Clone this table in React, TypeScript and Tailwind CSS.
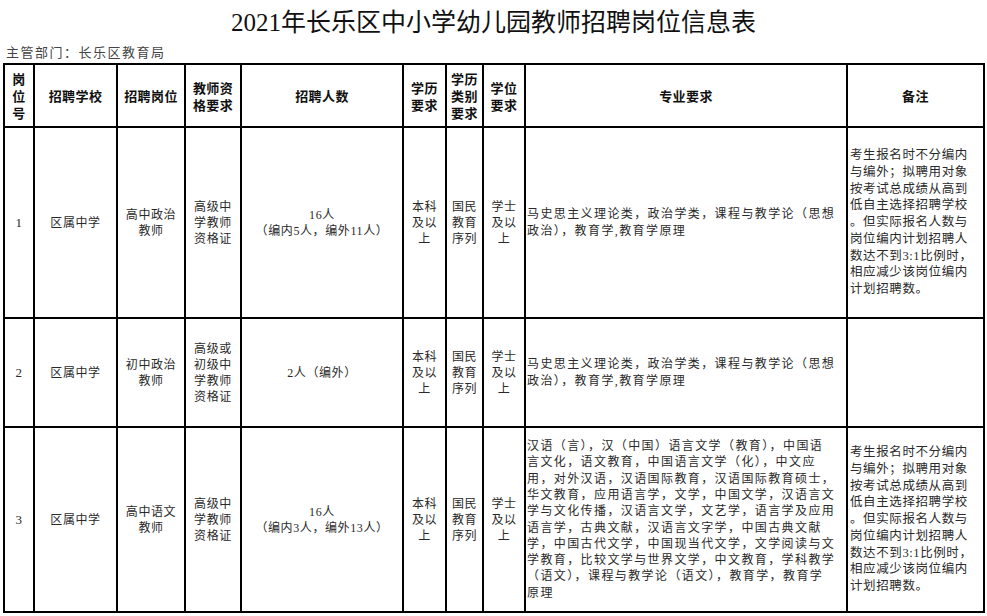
import React from "react";

const serif = "font-['Liberation_Serif','Noto_Sans_CJK_SC',serif]";
const head = "font-['Noto_Sans_CJK_SC',sans-serif] font-bold text-[13px] tracking-[0.4px] text-[#111]";

function Lines({ lines, cls }: { lines: string[]; cls?: string }) {
  return <div className={`whitespace-pre ${cls ?? ""}`}>{lines.join("\n")}</div>;
}

function Cell({ children, left }: { children?: React.ReactNode; left?: boolean }) {
  return (
    <div
      className={
        left
          ? "bg-white flex items-center justify-start text-left"
          : "bg-white flex items-center justify-center text-center"
      }
    >
      {children}
    </div>
  );
}

const headers: string[][] = [
  ["岗", "位", "号"],
  ["招聘学校"],
  ["招聘岗位"],
  ["教师资", "格要求"],
  ["招聘人数"],
  ["学历", "要求"],
  ["学历", "类别", "要求"],
  ["学位", "要求"],
  ["专业要求"],
  ["备注"],
];

const majors1 = ["马史思主义理论类，政治学类，课程与教学论（思想", "政治），教育学,教育学原理"];
const majors3 = [
  "汉语（言），汉（中国）语言文学（教育），中国语",
  "言文化，语文教育，中国语言文学（化），中文应",
  "用，对外汉语，汉语国际教育，汉语国际教育硕士，",
  "华文教育，应用语言学，文学，中国文学，汉语言文",
  "学与文化传播，汉语言文学，文艺学，语言学及应用",
  "语言学，古典文献，汉语言文字学，中国古典文献",
  "学，中国古代文学，中国现当代文学，文学阅读与文",
  "学教育，比较文学与世界文学，中文教育，学科教学",
  "（语文），课程与教学论（语文），教育学，教育学",
  "原理",
];
const remarks = [
  "考生报名时不分编内",
  "与编外；拟聘用对象",
  "按考试总成绩从高到",
  "低自主选择招聘学校",
  "。但实际报名人数与",
  "岗位编内计划招聘人",
  "数达不到3:1比例时，",
  "相应减少该岗位编内",
  "计划招聘数。",
];

type Row = {
  no: string;
  post: string[];
  cert: string[];
  count: string[];
  majors: string[];
  remarks: string[];
};

const rows: Row[] = [
  {
    no: "1",
    post: ["高中政治", "教师"],
    cert: ["高级中", "学教师", "资格证"],
    count: ["16人", "（编内5人，编外11人）"],
    majors: majors1,
    remarks: remarks,
  },
  {
    no: "2",
    post: ["初中政治", "教师"],
    cert: ["高级或", "初级中", "学教师", "资格证"],
    count: ["2人（编外）"],
    majors: majors1,
    remarks: [],
  },
  {
    no: "3",
    post: ["高中语文", "教师"],
    cert: ["高级中", "学教师", "资格证"],
    count: ["16人", "（编内3人，编外13人）"],
    majors: majors3,
    remarks: remarks,
  },
];

const body = "text-[12px] leading-[16px] tracking-[0.6px] text-[#2a2a2a]";

export default function App() {
  return (
    <div className={`w-[987px] h-[616px] bg-white overflow-hidden ${serif}`}>
      <div className="h-[42px] flex items-center justify-center text-[25px] leading-none text-[#111] pt-[2px]">
        2021年长乐区中小学幼儿园教师招聘岗位信息表
      </div>
      <div className="h-[21px] flex items-center pl-[6px] text-[13px] tracking-[1.5px] text-[#444]">
        主管部门：长乐区教育局
      </div>
      <div className="ml-[3px] w-[982px] border-2 border-black bg-black grid grid-cols-[28px_81px_66px_54px_160px_41px_35px_40px_320px_135px] grid-rows-[61px_189px_107px_183px] gap-[2px]">
        {headers.map((h, i) => (
          <Cell key={"h" + i}>
            <Lines lines={h} cls={`${head} leading-[17px]`} />
          </Cell>
        ))}
        {rows.map((r, ri) => (
          <React.Fragment key={ri}>
            <Cell>
              <div className={`${body} text-[13px]`}>{r.no}</div>
            </Cell>
            <Cell>
              <div className={body}>区属中学</div>
            </Cell>
            <Cell>
              <Lines lines={r.post} cls={body} />
            </Cell>
            <Cell>
              <Lines lines={r.cert} cls={body} />
            </Cell>
            <Cell>
              <Lines lines={r.count} cls={`${body} tracking-[0.3px]`} />
            </Cell>
            <Cell>
              <Lines lines={["本科", "及以", "上"]} cls={body} />
            </Cell>
            <Cell>
              <Lines lines={["国民", "教育", "序列"]} cls={body} />
            </Cell>
            <Cell>
              <Lines lines={["学士", "及以", "上"]} cls={body} />
            </Cell>
            <Cell left>
              <Lines
                lines={r.majors}
                cls="pl-[1px] text-[12px] leading-[16.3px] tracking-[1.4px] text-[#2a2a2a]"
              />
            </Cell>
            <Cell left>
              {r.remarks.length > 0 ? (
                <Lines
                  lines={r.remarks}
                  cls="pl-[2px] text-[12.5px] leading-[16.7px] tracking-[0.6px] text-[#2a2a2a]"
                />
              ) : null}
            </Cell>
          </React.Fragment>
        ))}
      </div>
    </div>
  );
}
